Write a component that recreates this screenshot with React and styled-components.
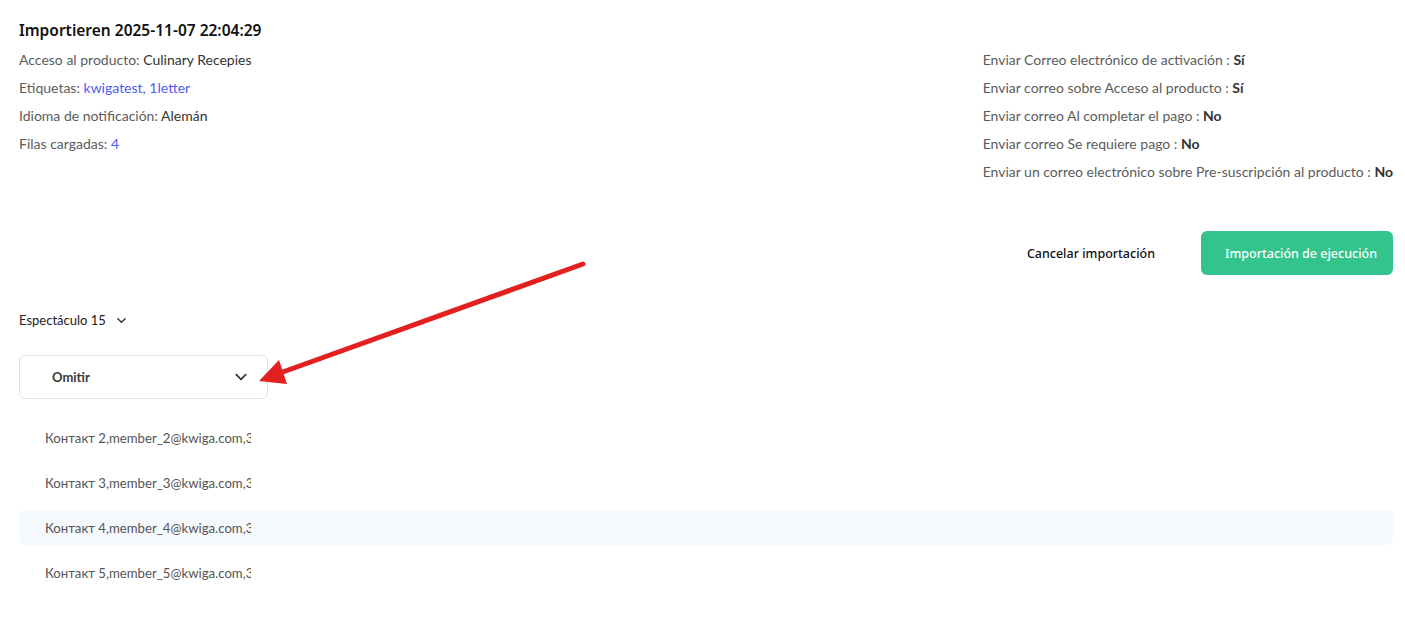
import React from "react";
import styled, { createGlobalStyle } from "styled-components";

const GlobalStyle = createGlobalStyle`
  body {
    margin: 0;
    background: #fff;
    font-family: "Lato", "Noto Sans", sans-serif;
    color: #5a5a5a;
  }
`;

const Page = styled.div`
  position: relative;
  padding: 16px 12px 40px 19px;
  min-height: 642px;
  box-sizing: border-box;
`;

const Title = styled.h1`
  margin: 0 0 2px;
  font-family: "Noto Sans", sans-serif;
  font-size: 15.5px;
  font-weight: 600;
  line-height: 28px;
  color: #111;
`;

const InfoGrid = styled.div`
  display: flex;
  justify-content: space-between;
`;

const InfoColumn = styled.div`
  display: flex;
  flex-direction: column;
`;

const InfoRow = styled.div`
  font-size: 14px;
  line-height: 28px;
  color: #5c5c5c;
  white-space: nowrap;
`;

const Value = styled.span`
  color: ${(p) => (p.$link ? "#4d5cf7" : "#333")};
  font-weight: ${(p) => (p.$bold ? 700 : 400)};
`;

const Actions = styled.div`
  display: flex;
  justify-content: flex-end;
  align-items: center;
  gap: 22px;
  margin-top: 45px;
`;

const Button = styled.button`
  height: 44px;
  border: none;
  border-radius: 6px;
  padding: 0 24px;
  font-family: "Noto Sans", sans-serif;
  font-size: 12.5px;
  font-weight: 500;
  white-space: nowrap;
  cursor: pointer;
  background: ${(p) => (p.$primary ? "#33c48d" : "transparent")};
  color: ${(p) => (p.$primary ? "#fff" : "#111")};
  width: ${(p) => (p.$primary ? "192px" : "auto")};
`;

const Section = styled.div`
  display: flex;
  align-items: center;
  gap: 10px;
  margin-top: 35px;
  font-size: 13px;
  line-height: 20px;
  color: #222;
`;

const Select = styled.div`
  display: flex;
  align-items: center;
  justify-content: space-between;
  width: 249px;
  height: 44px;
  margin-top: 25px;
  padding: 0 19px 0 32px;
  box-sizing: border-box;
  border: 1px solid #e1e1e8;
  border-radius: 6px;
  font-size: 13px;
  font-weight: 700;
  color: #3a3a3a;
`;

const Rows = styled.div`
  display: flex;
  flex-direction: column;
  gap: 10px;
  margin-top: 21px;
`;

const Row = styled.div`
  height: 35px;
  display: flex;
  align-items: center;
  padding-left: 26px;
  border-radius: 6px;
  background: ${(p) => (p.$active ? "#f5f8fd" : "transparent")};
`;

const RowText = styled.span`
  width: 206px;
  overflow: hidden;
  white-space: nowrap;
  font-size: 13.2px;
  color: #555;
`;

const Annotation = styled.svg`
  position: absolute;
  left: 0;
  top: 0;
  pointer-events: none;
`;

const Chevron = ({ size = 12 }) => (
  <svg width={size} height={size} viewBox="0 0 12 12" fill="none">
    <path d="M2 4l4 4 4-4" stroke="#333" strokeWidth="1.5" strokeLinecap="round" strokeLinejoin="round" />
  </svg>
);

const contacts = [2, 3, 4, 5];

export default function App() {
  return (
    <Page>
      <GlobalStyle />
      <Title>Importieren 2025-11-07 22:04:29</Title>
      <InfoGrid>
        <InfoColumn>
          <InfoRow>Acceso al producto: <Value>Culinary Recepies</Value></InfoRow>
          <InfoRow>
            Etiquetas: <Value $link>kwigatest</Value>, <Value $link>1letter</Value>
          </InfoRow>
          <InfoRow>Idioma de notificación: <Value>Alemán</Value></InfoRow>
          <InfoRow>Filas cargadas: <Value $link>4</Value></InfoRow>
        </InfoColumn>
        <InfoColumn>
          <InfoRow>Enviar Correo electrónico de activación : <Value $bold>Sí</Value></InfoRow>
          <InfoRow>Enviar correo sobre Acceso al producto : <Value $bold>Sí</Value></InfoRow>
          <InfoRow>Enviar correo Al completar el pago : <Value $bold>No</Value></InfoRow>
          <InfoRow>Enviar correo Se requiere pago : <Value $bold>No</Value></InfoRow>
          <InfoRow>
            Enviar un correo electrónico sobre Pre-suscripción al producto : <Value $bold>No</Value>
          </InfoRow>
        </InfoColumn>
      </InfoGrid>

      <Actions>
        <Button>Cancelar importación</Button>
        <Button $primary>Importación de ejecución</Button>
      </Actions>

      <Section>
        Espectáculo 15
        <Chevron size={11} />
      </Section>

      <Select>
        Omitir
        <Chevron size={14} />
      </Select>

      <Rows>
        {contacts.map((n) => (
          <Row key={n} $active={n === 4}>
            <RowText>Контакт {n},member_{n}@kwiga.com,380000000{n}</RowText>
          </Row>
        ))}
      </Rows>

      <Annotation width="1405" height="642" viewBox="0 0 1405 642">
        <line x1="583" y1="264" x2="280" y2="373" stroke="#e41f1f" strokeWidth="5" strokeLinecap="round" />
        <polygon points="259,381 279,360 287,384" fill="#e41f1f" />
      </Annotation>
    </Page>
  );
}
